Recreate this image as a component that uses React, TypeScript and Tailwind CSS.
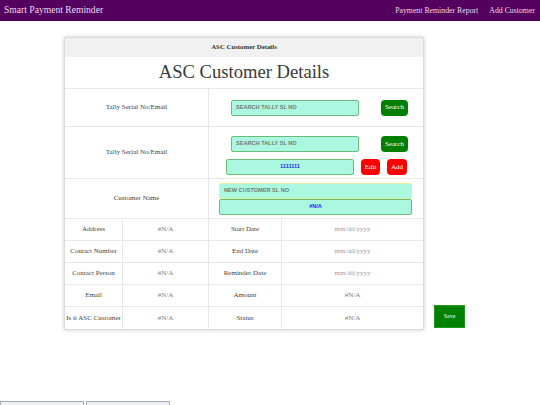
import React from "react";

const serif = "font-['Liberation_Serif','Times_New_Roman',serif]";
const sans = "font-['Liberation_Sans',Arial,sans-serif]";

function AquaInput({
  text,
  placeholder,
  w,
  border,
  center,
}: {
  text: string;
  placeholder?: boolean;
  w: string;
  border?: string;
  center?: boolean;
}) {
  return (
    <div
      className={`${w} h-[16px] bg-[#abf7df] border-[1.5px] ${border ?? "border-[#6cbb7c]"} rounded-[2px] flex items-center ${
        center ? "justify-center" : "pl-[4px]"
      } ${sans} font-bold text-[5.6px] leading-none ${placeholder ? "text-[#6b7c76]" : "text-[#1a2cff]"}`}
    >
      {text}
    </div>
  );
}

function Btn({ label, color, w }: { label: string; color: string; w: string }) {
  return (
    <div
      className={`${w} h-[16px] ${color} rounded-[4px] flex items-center justify-center text-white text-[7px] ${serif}`}
    >
      {label}
    </div>
  );
}

const cell = "border-b border-r border-[#e8e8e8] flex items-center justify-center";

export default function App() {
  const rows: [string, string, string, string, boolean][] = [
    ["Address", "#N/A", "Start Date", "mm/dd/yyyy", true],
    ["Contact Number", "#N/A", "End Date", "mm/dd/yyyy", true],
    ["Contact Person", "#N/A", "Reminder Date", "mm/dd/yyyy", true],
    ["Email", "#N/A", "Amount", "#N/A", false],
    ["Is it ASC Customer", "#N/A", "Status", "#N/A", false],
  ];
  return (
    <div className={`w-[540px] h-[405px] overflow-hidden bg-white ${serif}`}>
      <nav className="h-[21px] bg-[#53005e] flex items-center justify-between pl-[4px] pr-[5px]">
        <span className="text-[9.6px] text-[#eadcee]">Smart Payment Reminder</span>
        <div className="flex gap-[11px] text-[7.8px] text-[#eadcee]">
          <span>Payment Reminder Report</span>
          <span>Add Customer</span>
        </div>
      </nav>

      <div className="flex items-end mt-[16px]">
        <div className="ml-[64px] w-[360px] border border-[#dcdcdc] shadow-[0_0_4px_rgba(0,0,0,0.22)] bg-white text-[#444]">
          <div className="h-[19px] bg-[#f1f1f1] flex items-center justify-center font-bold text-[6.8px] text-[#333]">
            ASC Customer Details
          </div>
          <div className="h-[32px] flex items-center justify-center text-[18.6px] leading-none text-[#3a3a3a] border-b border-[#e8e8e8]">
            ASC Customer Details
          </div>
          <div className="grid grid-cols-[58px_86px_73px_141px] text-[7px]">
            <div className={`${cell} col-span-2 h-[38px]`}>Tally Serial No/Email</div>
            <div className="col-span-2 h-[38px] border-b border-[#e8e8e8] flex items-center pl-[22px] gap-[22px]">
              <AquaInput text="SEARCH TALLY SL NO" placeholder w="w-[128px]" />
              <Btn label="Search" color="bg-[#008000]" w="w-[27px]" />
            </div>
            <div className={`${cell} col-span-2 h-[52px]`}>Tally Serial No/Email</div>
            <div className="col-span-2 h-[52px] border-b border-[#e8e8e8] flex flex-col pt-[9px] gap-[7px]">
              <div className="flex items-center pl-[22px] gap-[22px]">
                <AquaInput text="SEARCH TALLY SL NO" placeholder w="w-[128px]" />
                <Btn label="Search" color="bg-[#008000]" w="w-[27px]" />
              </div>
              <div className="flex items-center pl-[17px] gap-[7px]">
                <AquaInput text="1111111" center w="w-[128px]" />
                <Btn label="Edit" color="bg-[#ff0000]" w="w-[19px]" />
                <Btn label="Add" color="bg-[#ff0000]" w="w-[20px]" />
              </div>
            </div>
            <div className={`${cell} col-span-2 h-[40px]`}>Customer Name</div>
            <div className="col-span-2 h-[40px] border-b border-[#e8e8e8] flex flex-col pt-[4px] pl-[10px]">
              <AquaInput text="NEW CUSTOMER SL NO" placeholder w="w-[193px]" border="border-[#dff39a]" />
              <AquaInput text="#N/A" center w="w-[193px]" />
            </div>
            {rows.map(([a, b, c, d, date], i) => (
              <React.Fragment key={a}>
                <div className={`${cell} h-[22px] ${i === rows.length - 1 ? "border-b-0" : ""}`}>{a}</div>
                <div className={`${cell} h-[22px] text-[#808080] ${i === rows.length - 1 ? "border-b-0" : ""}`}>{b}</div>
                <div className={`${cell} h-[22px] ${i === rows.length - 1 ? "border-b-0" : ""}`}>{c}</div>
                <div
                  className={`border-b border-[#e8e8e8] flex items-center justify-center h-[22px] ${
                    date ? "text-[#a0a0a0]" : "text-[#808080]"
                  } ${i === rows.length - 1 ? "border-b-0" : ""}`}
                >
                  {d}
                </div>
              </React.Fragment>
            ))}
          </div>
        </div>
        <div className="ml-[10px] mb-[2px] w-[31px] h-[23px] bg-[#008000] border border-[#1a9a1a] flex items-center justify-center text-white text-[6px]">
          Save
        </div>
      </div>

      <div className="flex gap-[2px] mt-[71px]">
        <div className="w-[84px] h-[20px] bg-[#efeff6] border border-[#a9a9b3]" />
        <div className="w-[84px] h-[20px] bg-[#efeff6] border border-[#a9a9b3]" />
      </div>
    </div>
  );
}
